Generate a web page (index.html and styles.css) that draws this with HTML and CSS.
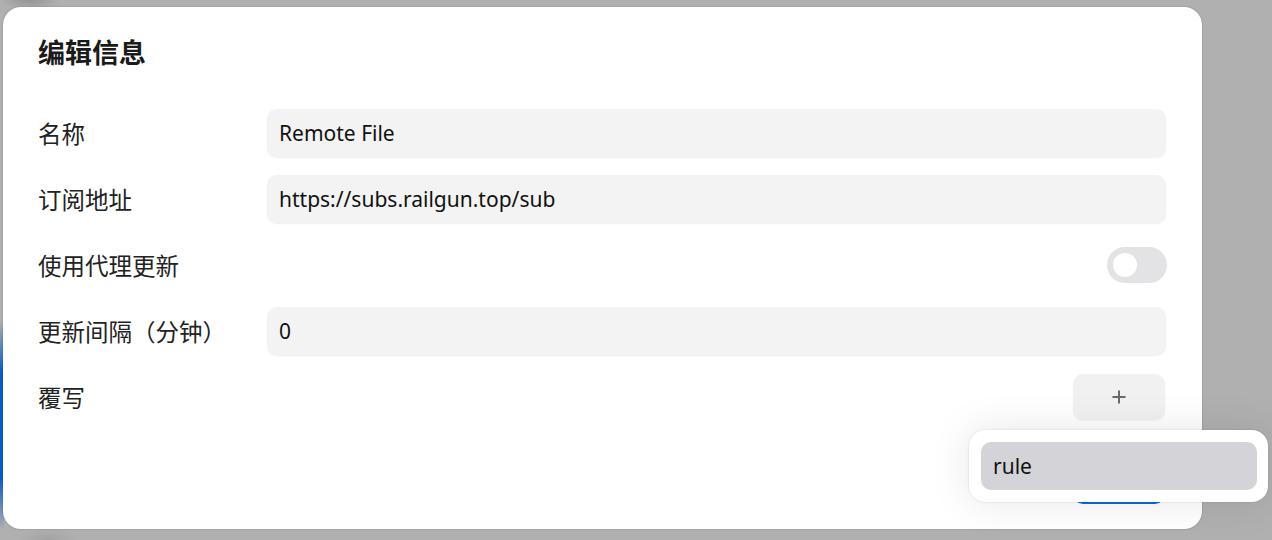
FILE: index.html
```html
<!DOCTYPE html>
<html lang="zh">
<head>
<meta charset="utf-8">
<title>编辑信息</title>
<link rel="stylesheet" href="styles.css">
</head>
<body>
<div class="backdrop">
  <div class="bg-stripe"></div>
  <div class="modal">
    <h1 class="title">编辑信息</h1>
    <div class="form">
      <div class="row">
        <div class="label">名称</div>
        <div class="input">Remote File</div>
      </div>
      <div class="row">
        <div class="label">订阅地址</div>
        <div class="input">https://subs.railgun.top/sub</div>
      </div>
      <div class="row">
        <div class="label">使用代理更新</div>
        <div class="switch"><span class="knob"></span></div>
      </div>
      <div class="row">
        <div class="label">更新间隔（分钟）</div>
        <div class="input">0</div>
      </div>
      <div class="row">
        <div class="label">覆写</div>
        <button class="add-btn" type="button">
          <svg width="16" height="16" viewBox="0 0 16 16"><path d="M8 1.5v13M1.5 8h13" stroke="#6a6a6a" stroke-width="2" fill="none"/></svg>
        </button>
      </div>
    </div>
    <div class="footer">
      <button class="primary" type="button">确定</button>
    </div>
  </div>
  <div class="dropdown">
    <div class="option">rule</div>
  </div>
</div>
</body>
</html>
```
FILE: styles.css
```css
* { box-sizing: border-box; }
html, body {
  margin: 0;
  padding: 0;
  width: 1272px;
  height: 540px;
  overflow: hidden;
}
body {
  background: #b0b0b0;
  font-family: "Noto Sans", "Noto Sans CJK SC", sans-serif;
  color: #1c1c1c;
}
.backdrop {
  position: relative;
  width: 1272px;
  height: 540px;
  padding: 7px 0 0 3px;
  background:
    radial-gradient(ellipse 30px 10px at 30px 0px, rgba(120,120,120,0.5), transparent),
    radial-gradient(ellipse 30px 12px at 48px 540px, rgba(150,150,150,0.5), transparent),
    #b0b0b0;
}
.bg-stripe {
  position: absolute;
  left: 0;
  top: 320px;
  width: 4px;
  height: 210px;
  background: linear-gradient(to bottom, rgba(10,90,200,0) 0%, #0a5cc4 25%, #0a5cc4 75%, rgba(10,90,200,0) 100%);
}
.modal {
  position: relative;
  width: 1199px;
  height: 522px;
  background: #fff;
  border-radius: 18px;
  box-shadow: 0 0 2px rgba(0,0,0,0.25);
  padding: 26px 36px 0 35px;
  display: flex;
  flex-direction: column;
}
.title {
  margin: 0;
  font-size: 27px;
  font-weight: 700;
  line-height: 40px;
  color: #1a1a1a;
}
.form {
  margin-top: 36px;
  display: flex;
  flex-direction: column;
  gap: 18px;
}
.row {
  display: flex;
  align-items: center;
  height: 48px;
}
.label {
  width: 229px;
  flex: none;
  font-size: 23.5px;
  color: #222;
}
.input {
  flex: 1;
  height: 48px;
  background: #f3f3f3;
  border-radius: 10px;
  box-shadow: 0 1px 2px rgba(0,0,0,0.07);
  padding: 0 12px;
  display: flex;
  align-items: center;
  font-size: 21px;
  color: #111;
}
.switch {
  margin-left: auto;
  margin-right: -1px;
  width: 60px;
  height: 36px;
  background: #e3e3e5;
  border-radius: 18px;
  padding: 6px;
  display: flex;
  align-items: center;
}
.knob {
  width: 24px;
  height: 24px;
  border-radius: 50%;
  background: #fff;
}
.add-btn {
  margin-left: auto;
  margin-right: 1px;
  width: 92px;
  height: 46px;
  border: none;
  border-radius: 10px;
  background: #f1f1f1;
  box-shadow: 0 1px 2px rgba(0,0,0,0.06);
  display: flex;
  align-items: center;
  justify-content: center;
  padding: 0;
}
.footer {
  margin-top: 37px;
  display: flex;
  justify-content: flex-end;
  padding-right: 1px;
}
.primary {
  width: 92px;
  height: 46px;
  border: none;
  border-radius: 10px;
  background: #0a6bd9;
  color: #fff;
  font-family: inherit;
  font-size: 18px;
}
.dropdown {
  position: absolute;
  left: 969px;
  top: 430px;
  width: 299px;
  height: 72px;
  background: #fff;
  border-radius: 16px;
  padding: 12px 11px 12px 12px;
  box-shadow: 0 0 40px rgba(0,0,0,0.10), 0 0 2px rgba(0,0,0,0.15);
}
.option {
  height: 48px;
  background: #d4d3d8;
  border-radius: 10px;
  padding: 0 12px;
  display: flex;
  align-items: center;
  font-size: 21px;
  color: #111;
}
```
